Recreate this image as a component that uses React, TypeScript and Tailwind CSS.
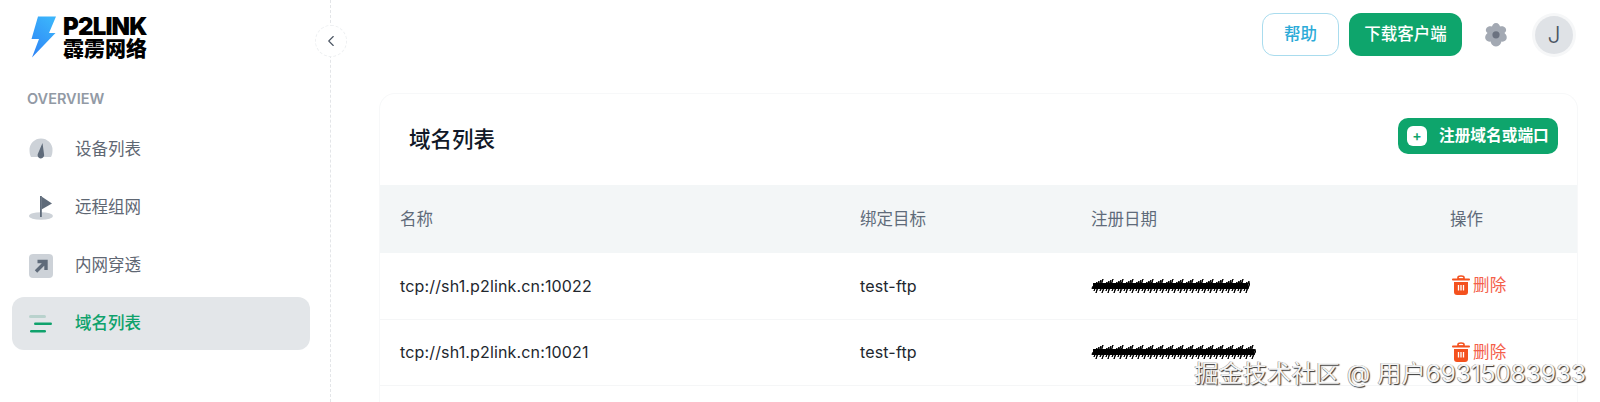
import { ChevronLeft } from "lucide-react"

const font = { fontFamily: "Inter, 'Noto Sans CJK SC', sans-serif" }

const BoltLogo = () => (
  <svg width="26" height="42" viewBox="0 0 26 42" className="shrink-0">
    <defs>
      <linearGradient id="bolt" x1="0.7" y1="0" x2="0.2" y2="1">
        <stop offset="0" stopColor="#3bb4fb" />
        <stop offset="1" stopColor="#2f86f6" />
      </linearGradient>
    </defs>
    <path d="M7 0.5 L25 0.5 L18 17 L24.5 17 L1 41.5 L8 23 L0.5 23 Z" fill="url(#bolt)" />
  </svg>
)

const GaugeIcon = () => (
  <svg width="24" height="24" viewBox="0 0 24 24">
    <path d="M0.5 12 A11.5 11.5 0 0 1 23.5 12 C23.5 15 23 17 22 19 L2 19 C1 17 0.5 15 0.5 12 Z" fill="#cdd2d8" />
    <path d="M13.5 5 L15 16 A3.3 3.3 0 1 1 9 15.5 Z" fill="#5f6b7a" />
  </svg>
)

const FlagIcon = () => (
  <svg width="24" height="26" viewBox="0 0 24 26">
    <ellipse cx="12" cy="21" rx="12" ry="3.8" fill="#cdd2d8" />
    <rect x="11" y="1" width="1.8" height="21" fill="#5f6b7a" />
    <path d="M12.5 1.5 L23 8.5 L12.5 14.5 Z" fill="#5f6b7a" />
  </svg>
)

const ArrowIcon = () => (
  <svg width="24" height="24" viewBox="0 0 24 24">
    <rect width="24" height="24" rx="4" fill="#cdd2d8" />
    <path d="M7 17.5 L16 8.5 M8.5 7.5 H17 V16" fill="none" stroke="#5f6b7a" strokeWidth="3.4" />
  </svg>
)

const ListIcon = () => (
  <svg width="24" height="20" viewBox="0 0 24 20">
    <rect x="0" y="1" width="17" height="3" rx="1.5" fill="#b9d2cd" />
    <rect x="5" y="8.5" width="18" height="2.6" rx="1.3" fill="#0fa26c" />
    <rect x="1" y="16" width="16" height="2.6" rx="1.3" fill="#0fa26c" />
  </svg>
)

const GearIcon = () => (
  <svg width="26" height="26" viewBox="0 0 26 26">
    <path
      d="M13 1 C15.5 1 16.5 3 17 4.5 C18.5 4 21 3.8 22.5 6 C24 8.5 22.5 10 21.5 11 C22.5 12 24.5 14 23.5 17 C22.5 19.5 20 19.8 18.5 19.6 C18 21.5 16.5 24.5 13 24.5 C9.5 24.5 8 21.5 7.5 19.6 C6 19.8 3.5 19.5 2.5 17 C1.5 14 3.5 12 4.5 11 C3.5 10 2 8.5 3.5 6 C5 3.8 7.5 4 9 4.5 C9.5 3 10.5 1 13 1 Z"
      fill="#a3a9b3"
    />
    <circle cx="13" cy="12.8" r="3.6" fill="#6b7280" />
  </svg>
)

const TrashIcon = () => (
  <svg width="18" height="21" viewBox="0 0 18 21" className="ml-[2px] shrink-0">
    <path d="M6 2.5 C6 0.5 12 0.5 12 2.5 L12 4 L6 4 Z" fill="none" stroke="#f4511e" strokeWidth="1.6" />
    <rect x="0" y="3.6" width="18" height="1.8" rx="0.9" fill="#f4511e" />
    <path d="M2 7 H16 V17 C16 19 15 20 13 20 H5 C3 20 2 19 2 17 Z" fill="#f4511e" />
    <path d="M6.5 10 V15.5 M9 10 V15.5 M11.5 10 V15.5" stroke="#fff" strokeWidth="1.3" />
  </svg>
)

// messy black scribble over the date column
const Scribble = ({ width }: { width: number }) => {
  let d = "M1 10"
  for (let x = 2; x < width; x += 2) {
    const top = 1 + ((x * 7) % 5)
    const bottom = 15 - ((x * 11) % 6)
    d += ` L${x + 2} ${top} L${x - 1} ${bottom}`
  }
  return (
    <svg width={width} height="16" viewBox={`0 0 ${width} 16`} className="block">
      <rect x="2" y="5" width={width - 4} height="6" fill="#000" />
      <path d={d} fill="none" stroke="#000" strokeWidth="1" />
    </svg>
  )
}

const navItems = [
  { label: "设备列表", icon: <GaugeIcon /> },
  { label: "远程组网", icon: <FlagIcon /> },
  { label: "内网穿透", icon: <ArrowIcon /> },
  { label: "域名列表", icon: <ListIcon />, active: true },
]

const rows = [
  { name: "tcp://sh1.p2link.cn:10022", target: "test-ftp", scribble: 159 },
  { name: "tcp://sh1.p2link.cn:10021", target: "test-ftp", scribble: 165 },
]

export default function App() {
  return (
    <div className="relative flex h-[402px] w-[1600px] overflow-hidden bg-white" style={font}>
      <aside className="relative w-[331px] shrink-0 border-r border-dashed border-[#e3e5e8] pl-3 pr-[20px]">
        <div className="flex h-[74px] items-start gap-[6px] pl-[19px] pt-[16px]">
          <BoltLogo />
          <div className="flex flex-col text-black">
            <span className="text-[24px] font-black leading-[21px] tracking-[-0.8px]" style={{ fontFamily: "Inter, sans-serif" }}>
              P2LINK
            </span>
            <span className="mt-[1px] text-[21px] font-black leading-[21px]">霹雳网络</span>
          </div>
        </div>
        <div className="pl-[15px] pt-[17px] text-[14.5px] font-semibold leading-4 text-[#929aa5]">OVERVIEW</div>
        <nav className="mt-[16px] flex flex-col gap-[5px]">
          {navItems.map((item) => (
            <div
              key={item.label}
              className={
                item.active
                  ? "flex h-[53px] items-center rounded-xl bg-[#e3e6e9] pl-[17px] text-[16.5px] font-medium text-[#0fa26c]"
                  : "flex h-[53px] items-center rounded-xl pl-[17px] text-[16.5px] font-normal text-[#5f6773]"
              }
            >
              <span className="flex w-[46px] shrink-0 items-center">{item.icon}</span>
              {item.label}
            </div>
          ))}
        </nav>
        <button className="absolute right-[-17px] top-[25px] flex h-8 w-8 items-center justify-center rounded-full border border-dashed border-[#eef0f2] bg-white text-[#4b5563]">
          <ChevronLeft size={18} strokeWidth={1.5} />
        </button>
      </aside>

      <main className="min-w-0 flex-1 pl-[48px] pr-[22px]">
        <header className="flex h-[93px] items-start justify-end pt-[13px]">
          <button className="h-[43px] w-[77px] rounded-xl border border-[#a9dcee] bg-white text-[16.5px] font-medium text-[#2cabd8]">
            帮助
          </button>
          <button className="ml-[10px] h-[43px] w-[113px] rounded-xl bg-[#0ea56c] text-[16.5px] font-medium text-white">
            下载客户端
          </button>
          <span className="ml-[21px] mt-[9px]">
            <GearIcon />
          </span>
          <span className="ml-[26px] mr-[5px] mt-[3px] flex h-[38px] w-[38px] items-center justify-center rounded-full bg-[#dfe2e6] text-[23px] font-light text-[#4b5563] ring-[3px] ring-[#f6f7f8]">
            J
          </span>
        </header>

        <section className="rounded-t-2xl border-x border-t border-[#f7f8f9] bg-white">
          <div className="flex h-[91px] items-center justify-between pl-[29px] pr-[19px]">
            <h1 className="text-[21.5px] font-medium text-[#111827]">域名列表</h1>
            <button className="mb-[7px] flex h-[36px] w-[160px] items-center rounded-[10px] bg-[#0ea56c] pl-[9px] text-[15.7px] font-semibold text-white">
              <span className="mr-[12px] flex h-[20px] w-[20px] items-center justify-center rounded-[6px] bg-white text-[14px] leading-none text-[#0ea56c]">
                +
              </span>
              注册域名或端口
            </button>
          </div>
          <table className="w-full table-fixed border-collapse text-left">
            <colgroup>
              <col className="w-[460px]" />
              <col className="w-[231px]" />
              <col className="w-[359px]" />
              <col />
            </colgroup>
            <thead>
              <tr className="h-[68px] bg-[#f3f6f7] text-[16.5px] text-[#5f6b7a]">
                <th className="pl-5 font-normal">名称</th>
                <th className="pl-5 font-normal">绑定目标</th>
                <th className="pl-5 font-normal">注册日期</th>
                <th className="pl-5 font-normal">操作</th>
              </tr>
            </thead>
            <tbody>
              {rows.map((row) => (
                <tr key={row.name} className="h-[66px] border-b border-[#f5f6f7] text-[16px] tracking-[0.15px] text-[#22272e]">
                  <td className="pl-5">{row.name}</td>
                  <td className="pl-5">{row.target}</td>
                  <td className="pl-5">
                    <Scribble width={row.scribble} />
                  </td>
                  <td className="pl-5">
                    <span className="flex items-center gap-[3px] text-[16.5px] text-[#f4604a]">
                      <TrashIcon />
                      删除
                    </span>
                  </td>
                </tr>
              ))}
              <tr className="h-[66px]">
                <td colSpan={4} />
              </tr>
            </tbody>
          </table>
        </section>
      </main>

      <div
        className="absolute bottom-[13px] right-[14px] text-[24.3px] leading-8 text-[#f4f4f4]"
        style={{ textShadow: "1px 1px 1px #333, -0.5px -0.5px 0 #888" }}
      >
        掘金技术社区 @ 用户69315083933
      </div>
    </div>
  )
}
